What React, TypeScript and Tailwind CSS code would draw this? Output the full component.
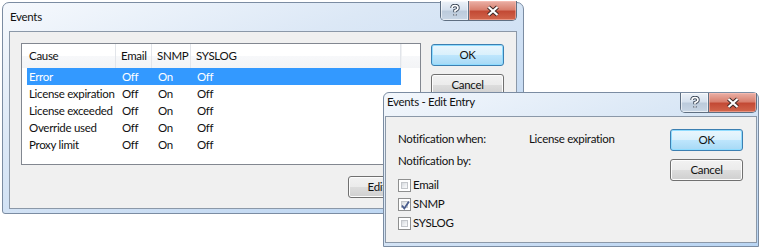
const rows = [
  { cause: "Error", email: "Off", snmp: "On", syslog: "Off", selected: true },
  { cause: "License expiration", email: "Off", snmp: "On", syslog: "Off" },
  { cause: "License exceeded", email: "Off", snmp: "On", syslog: "Off" },
  { cause: "Override used", email: "Off", snmp: "On", syslog: "Off" },
  { cause: "Proxy limit", email: "Off", snmp: "On", syslog: "Off" },
];

const font =
  "font-['Segoe_UI',Lato,sans-serif] text-[11.5px] tracking-[-0.3px] leading-[16px] text-[#111] whitespace-nowrap";

const CaptionButtons = ({ className = "" }: { className?: string }) => (
  <div className={`flex h-[20px] border border-t-0 border-[#5f6f82] rounded-b-[5px] overflow-hidden ${className}`}>
    <div className="w-[27px] flex items-center justify-center bg-[linear-gradient(to_bottom,#edf2f8_0%,#d6e1ee_45%,#bccbdc_55%,#c9d6e5_100%)] shadow-[inset_0_0_0_1px_rgba(255,255,255,0.6)]">
      <svg width="10" height="13" viewBox="0 0 10 13">
        <path d="M2 4 Q2 1.5 5 1.5 Q8 1.5 8 4 Q8 5.8 5 6.6 L5 8.3 M5 10.2 L5 11.6" fill="none" stroke="#3b4656" strokeWidth="3.4" />
        <path d="M2 4 Q2 1.5 5 1.5 Q8 1.5 8 4 Q8 5.8 5 6.6 L5 8.3 M5 10.2 L5 11.6" fill="none" stroke="#ffffff" strokeWidth="1.6" />
      </svg>
    </div>
    <div className="w-[48px] border-l border-[#5f6f82] flex items-center justify-center bg-[linear-gradient(to_bottom,#eab0a6_0%,#d9806f_45%,#c34a35_55%,#d2664c_100%)] shadow-[inset_0_0_0_1px_rgba(255,200,190,0.5)]">
      <svg width="14" height="12" viewBox="0 0 14 12">
        <path d="M2.5 2 L11.5 10 M11.5 2 L2.5 10" fill="none" stroke="#3f2a28" strokeWidth="4.2" />
        <path d="M2.5 2 L11.5 10 M11.5 2 L2.5 10" fill="none" stroke="#ffffff" strokeWidth="2.2" />
      </svg>
    </div>
  </div>
);

const Button = ({
  label,
  primary = false,
  labelClass = "",
}: {
  label: string;
  primary?: boolean;
  labelClass?: string;
}) => (
  <div
    className={`w-[73px] h-[22px] rounded-[3px] border flex items-center justify-center ${
      primary
        ? "border-[#3c7fb1] bg-[linear-gradient(to_bottom,#eaf6fd_0%,#d9f0fc_50%,#bee6fd_50%,#a7d9f5_100%)] shadow-[inset_0_0_0_1px_#8fdcff]"
        : "border-[#707070] bg-[linear-gradient(to_bottom,#f2f2f2_0%,#ebebeb_50%,#dddddd_50%,#cfcfcf_100%)] shadow-[inset_0_0_0_1px_#fcfcfc]"
    }`}
  >
    <span className={labelClass}>{label}</span>
  </div>
);

const Checkbox = ({ checked = false }: { checked?: boolean }) => (
  <div className="w-[13px] h-[13px] border border-[#8e8f8f] bg-white p-[2px]">
    <div className="w-full h-full border border-[#c4c7cb] bg-[linear-gradient(135deg,#d6d9dd_0%,#eef0f2_60%,#fbfbfb_100%)] relative">
      {checked && (
        <svg width="11" height="11" viewBox="0 0 11 11" className="absolute left-[-2px] top-[-2px]">
          <path d="M2 5.5 L4.3 8.5 L9 1.5" fill="none" stroke="#4a5d8e" strokeWidth="1.8" />
        </svg>
      )}
    </div>
  </div>
);

const EventsDialog = () => (
  <div className="absolute left-[2px] top-[2px] w-[522px] h-[212px] rounded-t-[7px] rounded-b-[3px] border border-[#7b8ca2] bg-[linear-gradient(160deg,#f6f9fd_0%,#dce8f6_35%,#c8dcf3_70%,#b9d5f3_100%)] flex flex-col px-[6px] pb-[4px]">
    <div className="h-[28px] flex items-start justify-between">
      <div className="pt-[6px] pl-[1px]">Events</div>
      <CaptionButtons className="-mt-[2px]" />
    </div>
    <div className="flex-1 border border-[#8b98a8] bg-[#f0f0f0] flex pl-[11px] pt-[11px] gap-[10px]">
      <div className="flex flex-col">
        <div className="w-[400px] h-[122px] border border-[#828790] bg-white">
          <div className="h-[24px] flex items-center bg-[linear-gradient(to_bottom,#ffffff_0%,#ffffff_50%,#f7f8fa_50%,#f3f4f6_100%)]">
            <div className="w-[94px] pl-[7px] h-full flex items-center border-r border-[#e2e5ea]">Cause</div>
            <div className="w-[36px] pl-[5px] h-full flex items-center border-r border-[#e2e5ea]">Email</div>
            <div className="w-[39px] pl-[5px] h-full flex items-center border-r border-[#e2e5ea]">SNMP</div>
            <div className="w-[210px] pl-[5px] h-full flex items-center border-r border-[#e2e5ea]">SYSLOG</div>
            <div className="flex-1 h-full border-l border-[#f0f1f3]" />
          </div>
          {rows.map((r) => (
            <div
              key={r.cause}
              className={`ml-[5px] w-[374px] h-[17px] flex items-center ${r.selected ? "bg-[#3399ff] text-white" : ""}`}
            >
              <div className="w-[89px] pl-[2px]">{r.cause}</div>
              <div className="w-[36px] pl-[6px]">{r.email}</div>
              <div className="w-[39px] pl-[6px]">{r.snmp}</div>
              <div className="flex-1 pl-[6px]">{r.syslog}</div>
            </div>
          ))}
        </div>
        <div className="mt-[11px] self-end">
          <Button label="Edit..." labelClass="pr-[8px]" />
        </div>
      </div>
      <div className="flex flex-col gap-[8px] mt-[1px]">
        <Button label="OK" primary />
        <Button label="Cancel" />
      </div>
    </div>
  </div>
);

const EditEntryDialog = () => (
  <div className="absolute left-[383px] top-[92px] w-[376px] h-[155px] rounded-t-[6px] border border-[#7b8ca2] bg-[linear-gradient(160deg,#f3f7fc_0%,#dbe8f6_40%,#c6dbf3_75%,#b9d5f3_100%)] flex flex-col px-[1px] pb-[3px]">
    <div className="h-[23px] flex items-start justify-between">
      <div className="pt-[1px] pl-[2px]">Events - Edit Entry</div>
      <CaptionButtons />
    </div>
    <div className="flex-1 border border-[#8b98a8] bg-[#f0f0f0] flex justify-between">
      <div className="pl-[12px] pt-[14px] flex flex-col">
        <div className="flex">
          <div className="w-[131px]">Notification when:</div>
          <div>License expiration</div>
        </div>
        <div className="mt-[6px]">Notification by:</div>
        <div className="mt-[7px] flex flex-col">
          {[
            { label: "Email", checked: false },
            { label: "SNMP", checked: true },
            { label: "SYSLOG", checked: false },
          ].map((c) => (
            <div key={c.label} className="h-[19px] flex items-start gap-[2px]">
              <div className="pt-[3px]">
                <Checkbox checked={c.checked} />
              </div>
              <div className="pt-[1px]">{c.label}</div>
            </div>
          ))}
        </div>
      </div>
      <div className="pr-[13px] pt-[12px] flex flex-col gap-[8px]">
        <Button label="OK" primary />
        <Button label="Cancel" />
      </div>
    </div>
  </div>
);

export default function App() {
  return (
    <div className={`relative w-[759px] h-[247px] bg-white overflow-hidden ${font}`}>
      <EventsDialog />
      <EditEntryDialog />
    </div>
  );
}
